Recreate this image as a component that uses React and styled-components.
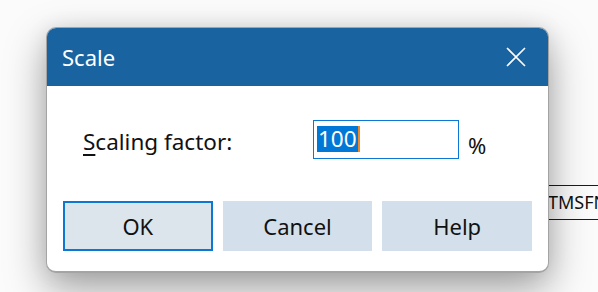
import React from 'react';
import styled, { createGlobalStyle } from 'styled-components';

const GlobalStyle = createGlobalStyle`
  body {
    margin: 0;
    background: #f7f7f7;
    font-family: "Noto Sans", "Open Sans", sans-serif;
  }
`;

const Stage = styled.div`
  position: relative;
  width: 598px;
  height: 292px;
  overflow: hidden;
  box-sizing: border-box;
  padding: 27px 0 0 46px;
  background: #fbfbfb;
`;

// strip of the window lying behind the dialog
const BehindField = styled.div`
  position: absolute;
  left: 548px;
  right: 0;
  top: 185px;
  height: 33px;
  border-top: 1px solid #1c1c1c;
  border-bottom: 1px solid #1c1c1c;
  font-size: 18px;
  line-height: 33px;
  color: #111;
  white-space: nowrap;
  overflow: hidden;
`;

const Dialog = styled.div`
  position: relative;
  z-index: 1;
  width: 503px;
  height: 246px;
  box-sizing: border-box;
  border: 1px solid #a4a4a4;
  border-bottom-width: 2px;
  border-radius: 10px;
  overflow: hidden;
  background: #fff;
  box-shadow: 0 16px 40px rgba(0, 0, 0, 0.36), 0 0 20px rgba(0, 0, 0, 0.08);
`;

const TitleBar = styled.div`
  height: 58px;
  display: flex;
  align-items: center;
  justify-content: space-between;
  padding: 0 22px 0 15px;
  background: #1963a0;
  color: #fff;
  font-size: 22px;
`;

const CloseBtn = styled.button`
  display: flex;
  padding: 0;
  border: 0;
  background: none;
  color: #fff;
`;

const Body = styled.div`
  padding: 32px 16px 0 16px;
`;

const FieldRow = styled.div`
  display: flex;
  align-items: center;
  padding-left: 20px;
`;

const Label = styled.label`
  width: 230px;
  font-size: 22.5px;
  color: #111;
  padding-top: 4px;
  & u {
    text-underline-offset: 4px;
  }
`;

const FieldBox = styled.div`
  width: 146px;
  height: 39px;
  box-sizing: border-box;
  border: 1px solid #0a78d4;
  padding: 2px 3px;
  display: flex;
  align-items: center;
  font-size: 22.5px;
`;

const Selected = styled.span`
  background: #0078d7;
  color: #fff;
  line-height: 26px;
  padding: 0 1px;
  border-right: 2px solid #ef8a2a;
`;

const Unit = styled.span`
  margin-left: 9px;
  padding-top: 12px;
  font-size: 22px;
  color: #111;
`;

const ButtonRow = styled.div`
  display: flex;
  gap: 10px;
  margin-top: 41px;
`;

const Button = styled.button`
  width: 150px;
  height: 50px;
  box-sizing: border-box;
  font-family: inherit;
  font-size: 22px;
  color: #111;
  background: ${p => (p.$primary ? '#dce4ec' : '#d3dfea')};
  border: 2px solid ${p => (p.$primary ? '#0c78d4' : '#d3dfea')};
  padding: 0;
`;

function CloseIcon() {
  return (
    <svg width="20" height="20" viewBox="0 0 20 20">
      <path d="M1 1 L19 19 M19 1 L1 19" stroke="currentColor" strokeWidth="1.6" fill="none" />
    </svg>
  );
}

export default function App() {
  return (
    <Stage>
      <GlobalStyle />
      <BehindField>TMSFN</BehindField>
      <Dialog>
        <TitleBar>
          <span>Scale</span>
          <CloseBtn aria-label="Close"><CloseIcon /></CloseBtn>
        </TitleBar>
        <Body>
          <FieldRow>
            <Label><u>S</u>caling factor:</Label>
            <FieldBox><Selected>100</Selected></FieldBox>
            <Unit>%</Unit>
          </FieldRow>
          <ButtonRow>
            <Button $primary>OK</Button>
            <Button>Cancel</Button>
            <Button>Help</Button>
          </ButtonRow>
        </Body>
      </Dialog>
    </Stage>
  );
}
